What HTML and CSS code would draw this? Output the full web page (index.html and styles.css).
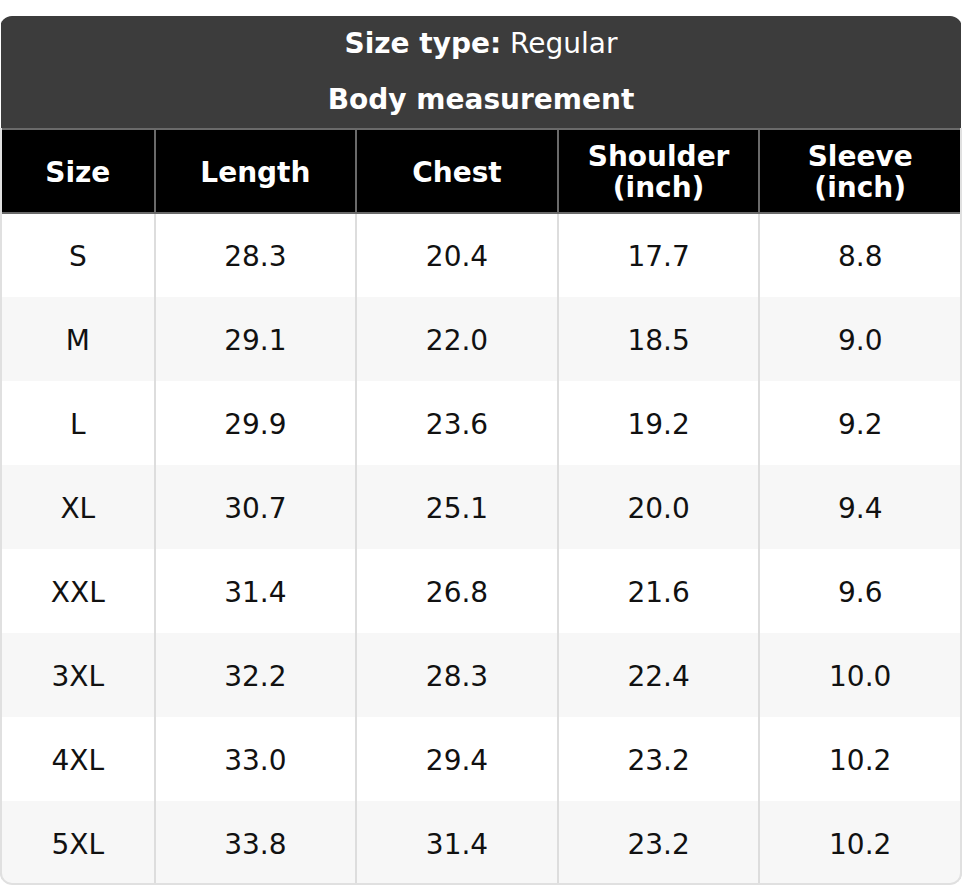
FILE: index.html
```html
<!DOCTYPE html>
<html lang="en">
<head>
<meta charset="utf-8">
<title>Size chart</title>
<link rel="stylesheet" href="styles.css">
</head>
<body>
<div class="chart">
  <table class="size-table">
    <colgroup>
      <col class="col-size">
      <col class="col-val">
      <col class="col-val">
      <col class="col-val">
      <col class="col-val">
    </colgroup>
    <thead>
      <tr class="title-row">
        <th colspan="5"><b>Size type:</b> Regular</th>
      </tr>
      <tr class="title-row title-row-2">
        <th colspan="5">Body measurement</th>
      </tr>
      <tr class="head-row">
        <th>Size</th>
        <th>Length</th>
        <th>Chest</th>
        <th>Shoulder<br>(inch)</th>
        <th>Sleeve<br>(inch)</th>
      </tr>
    </thead>
    <tbody>
      <tr><td>S</td><td>28.3</td><td>20.4</td><td>17.7</td><td>8.8</td></tr>
      <tr><td>M</td><td>29.1</td><td>22.0</td><td>18.5</td><td>9.0</td></tr>
      <tr><td>L</td><td>29.9</td><td>23.6</td><td>19.2</td><td>9.2</td></tr>
      <tr><td>XL</td><td>30.7</td><td>25.1</td><td>20.0</td><td>9.4</td></tr>
      <tr><td>XXL</td><td>31.4</td><td>26.8</td><td>21.6</td><td>9.6</td></tr>
      <tr><td>3XL</td><td>32.2</td><td>28.3</td><td>22.4</td><td>10.0</td></tr>
      <tr><td>4XL</td><td>33.0</td><td>29.4</td><td>23.2</td><td>10.2</td></tr>
      <tr><td>5XL</td><td>33.8</td><td>31.4</td><td>23.2</td><td>10.2</td></tr>
    </tbody>
  </table>
</div>
</body>
</html>
```

FILE: styles.css
```css
html, body {
  margin: 0;
  padding: 0;
  background: #ffffff;
}

body {
  font-family: "DejaVu Sans", "Liberation Sans", sans-serif;
  font-size: 28px;
  color: #111111;
}

.chart {
  position: relative;
  margin-top: 16px;
  border-radius: 12px;
  overflow: hidden;
}

/* outer frame drawn over the body part of the table */
.chart::after {
  content: "";
  position: absolute;
  left: 0;
  right: 0;
  top: 112px;
  bottom: 0;
  border: 2px solid #e0e0e0;
  border-top: none;
  border-radius: 0 0 12px 12px;
  pointer-events: none;
}

.size-table {
  width: 100%;
  border-collapse: collapse;
  table-layout: fixed;
  text-align: center;
}

.col-size {
  width: 16%;
}

.col-val {
  width: 21%;
}

.title-row th {
  background: #3c3c3c;
  color: #ffffff;
  height: 56px;
  padding: 0;
  font-weight: normal;
  line-height: 32px;
  border: none;
}

.title-row b {
  font-weight: bold;
}

.title-row-2 th {
  font-weight: bold;
}

.head-row th {
  background: #000000;
  color: #ffffff;
  font-weight: bold;
  height: 84px;
  padding: 2px 6px 0;
  line-height: 31px;
  border: 2px solid #6a6a6a;
  box-sizing: border-box;
}

.size-table td {
  height: 84px;
  padding: 3px 6px 0;
  line-height: 32px;
  border: none;
  border-left: 2px solid #dddddd;
  border-right: 2px solid #dddddd;
  box-sizing: border-box;
}

.size-table tbody tr:nth-child(even) td {
  background: #f7f7f7;
}

.size-table tbody tr:nth-child(odd) td {
  background: #ffffff;
}
```
